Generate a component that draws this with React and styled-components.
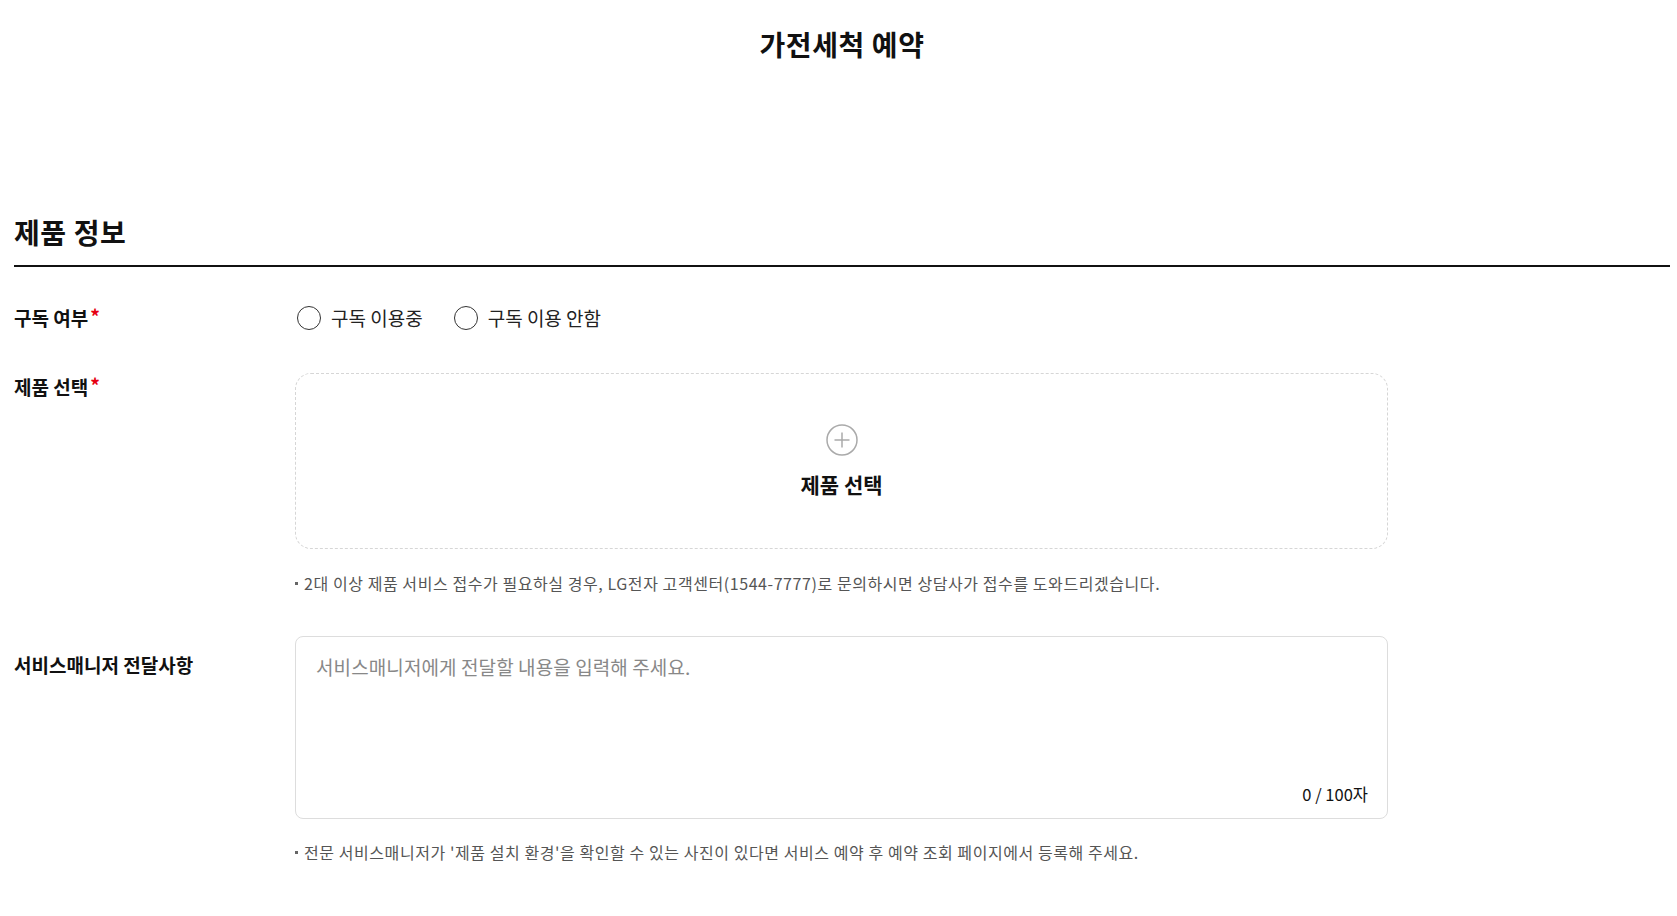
import styled, { createGlobalStyle } from "styled-components";

const GlobalStyle = createGlobalStyle`
  * {
    box-sizing: border-box;
  }
  body {
    margin: 0;
    background: #fff;
    font-family: "Noto Sans CJK KR", "Noto Sans", sans-serif;
    color: #111;
  }
`;

const Page = styled.div`
  padding: 0 7px 40px 14px;
`;

const Header = styled.header`
  display: flex;
  justify-content: center;
  padding-top: 25px;
`;

const PageTitle = styled.h1`
  margin: 0;
  font-size: 28px;
  line-height: 38px;
  font-weight: 700;
  letter-spacing: 0.6px;
  color: #111;
`;

const Section = styled.section`
  margin-top: 151px;
`;

const SectionTitle = styled.h2`
  margin: 0;
  font-size: 28px;
  line-height: 36px;
  font-weight: 700;
  letter-spacing: 0.6px;
  padding-bottom: 15px;
  border-bottom: 2px solid #111;
`;

const Row = styled.div`
  display: grid;
  grid-template-columns: 281px 1093px;
  align-items: ${(p) => (p.$center ? "center" : "start")};
  margin-top: ${(p) => p.$gap}px;
`;

const Label = styled.div`
  font-size: 19px;
  line-height: 26px;
  font-weight: 700;
  color: #111;
  padding-top: ${(p) => p.$top || 0}px;
`;

const Star = styled.span`
  color: #e60012;
  margin-left: 2px;
  position: relative;
  top: -2px;
`;

const RadioGroup = styled.div`
  display: flex;
  align-items: center;
  gap: 31px;
  padding-left: 2px;
`;

const RadioLabel = styled.label`
  display: flex;
  align-items: center;
  gap: 10px;
  font-size: 19px;
  line-height: 26px;
  color: #222;
  cursor: pointer;
`;

const RadioCircle = styled.span`
  width: 24px;
  height: 24px;
  border-radius: 50%;
  border: 1.5px solid #333;
  background: #fff;
`;

const Field = styled.div`
  display: flex;
  flex-direction: column;
`;

const SelectBox = styled.button`
  height: 176px;
  border: 1px dashed #d6d6d6;
  border-radius: 16px;
  background: #fff;
  display: flex;
  flex-direction: column;
  align-items: center;
  justify-content: center;
  gap: 14px;
  padding: 0;
  font-family: inherit;
  cursor: pointer;
`;

const SelectText = styled.span`
  font-size: 21px;
  line-height: 28px;
  font-weight: 700;
  color: #111;
`;

const Notice = styled.p`
  margin: ${(p) => p.$top}px 0 0;
  display: flex;
  align-items: center;
  gap: 6px;
  font-size: 16px;
  line-height: 22px;
  letter-spacing: 0.57px;
  color: #555;
  &::before {
    content: "";
    width: 3px;
    height: 3px;
    background: #666;
    flex: none;
  }
`;

const MemoBox = styled.div`
  height: 183px;
  border: 1px solid #ddd;
  border-radius: 8px;
  display: flex;
  flex-direction: column;
  padding: 17px 19px 13px 20px;
`;

const MemoInput = styled.textarea`
  flex: 1;
  border: none;
  outline: none;
  resize: none;
  padding: 0;
  font-family: inherit;
  font-size: 19px;
  line-height: 26px;
  letter-spacing: 0.1px;
  color: #111;
  &::placeholder {
    color: #888;
  }
`;

const Counter = styled.div`
  align-self: flex-end;
  font-size: 16.5px;
  line-height: 22px;
  color: #111;
`;

const PlusIcon = () => (
  <svg width="32" height="32" viewBox="0 0 32 32" fill="none">
    <circle cx="16" cy="16" r="15" stroke="#aaa" strokeWidth="1.5" />
    <path d="M16 8.5v15M8.5 16h15" stroke="#aaa" strokeWidth="1.5" />
  </svg>
);

const App = () => {
  return (
    <>
      <GlobalStyle />
      <Page>
        <Header>
          <PageTitle>가전세척 예약</PageTitle>
        </Header>
        <Section>
          <SectionTitle>제품 정보</SectionTitle>

          <Row $center $gap={38}>
            <Label>
              구독 여부<Star>*</Star>
            </Label>
            <RadioGroup>
              <RadioLabel>
                <RadioCircle />
                구독 이용중
              </RadioLabel>
              <RadioLabel>
                <RadioCircle />
                구독 이용 안함
              </RadioLabel>
            </RadioGroup>
          </Row>

          <Row $gap={42}>
            <Label $top={1}>
              제품 선택<Star>*</Star>
            </Label>
            <Field>
              <SelectBox type="button">
                <PlusIcon />
                <SelectText>제품 선택</SelectText>
              </SelectBox>
              <Notice $top={23}>
                2대 이상 제품 서비스 접수가 필요하실 경우, LG전자 고객센터(1544-7777)로 문의하시면 상담사가 접수를 도와드리겠습니다.
              </Notice>
            </Field>
          </Row>

          <Row $gap={42}>
            <Label $top={16}>서비스매니저 전달사항</Label>
            <Field>
              <MemoBox>
                <MemoInput placeholder="서비스매니저에게 전달할 내용을 입력해 주세요." />
                <Counter>0 / 100자</Counter>
              </MemoBox>
              <Notice $top={22}>
                전문 서비스매니저가 '제품 설치 환경'을 확인할 수 있는 사진이 있다면 서비스 예약 후 예약 조회 페이지에서 등록해 주세요.
              </Notice>
            </Field>
          </Row>
        </Section>
      </Page>
    </>
  );
};

export default App;
